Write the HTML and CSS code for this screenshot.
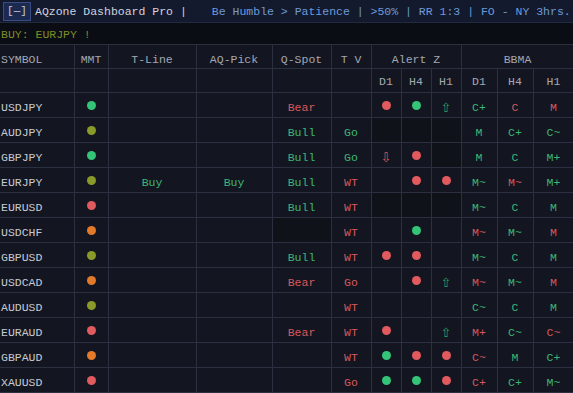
FILE: index.html
```html
<!DOCTYPE html>
<html>
<head>
<meta charset="utf-8">
<link rel="stylesheet" href="styles.css">
</head>
<body>
<div class="topbar">
  <span class="btn">[&#8212;]</span>
  <span class="title">AQzone Dashboard Pro |</span>
  <span class="motto">Be Humble &gt; Patience | &gt;50% | RR 1:3 | FO - NY 3hrs.</span>
</div>
<div class="signal">BUY: EURJPY !</div>
<table class="grid">
  <colgroup>
    <col class="c-sym"><col class="c-mmt"><col class="c-tl"><col class="c-aq"><col class="c-qs"><col class="c-tv">
    <col class="c-al"><col class="c-al"><col class="c-al"><col class="c-bb"><col class="c-bb"><col class="c-bb3">
  </colgroup>
  <thead>
    <tr class="h1">
      <th class="left">SYMBOL</th><th>MMT</th><th>T-Line</th><th>AQ-Pick</th><th>Q-Spot</th><th>T V</th>
      <th colspan="3">Alert Z</th><th colspan="3">BBMA</th>
    </tr>
    <tr class="h2">
      <th></th><th></th><th></th><th></th><th></th><th></th>
      <th>D1</th><th>H4</th><th>H1</th><th>D1</th><th>H4</th><th>H1</th>
    </tr>
  </thead>
  <tbody>
    <tr><td class="sym">USDJPY</td><td><i class="dot g"></i></td><td></td><td></td><td class="r">Bear</td><td></td><td><i class="dot r"></i></td><td><i class="dot g"></i></td><td class="ar g">&#8679;</td><td class="gt">C+</td><td class="r">C</td><td class="r">M</td></tr>
    <tr><td class="sym">AUDJPY</td><td><i class="dot o"></i></td><td></td><td></td><td class="gt">Bull</td><td class="gt">Go</td><td class="dk"></td><td class="dk"></td><td class="dk"></td><td class="gt">M</td><td class="gt">C+</td><td class="gt">C~</td></tr>
    <tr><td class="sym">GBPJPY</td><td><i class="dot g"></i></td><td></td><td></td><td class="gt">Bull</td><td class="gt">Go</td><td class="ar r">&#8681;</td><td><i class="dot r"></i></td><td class="dk"></td><td class="gt">M</td><td class="gt">C</td><td class="gt">M+</td></tr>
    <tr><td class="sym">EURJPY</td><td><i class="dot o"></i></td><td class="gt">Buy</td><td class="gt">Buy</td><td class="gt">Bull</td><td class="r">WT</td><td></td><td><i class="dot r"></i></td><td><i class="dot r"></i></td><td class="gt">M~</td><td class="r">M~</td><td class="gt">M+</td></tr>
    <tr><td class="sym">EURUSD</td><td><i class="dot r"></i></td><td></td><td></td><td class="gt">Bull</td><td class="r">WT</td><td class="dk"></td><td class="dk"></td><td class="dk"></td><td class="gt">M~</td><td class="gt">C</td><td class="gt">M</td></tr>
    <tr><td class="sym">USDCHF</td><td><i class="dot y"></i></td><td></td><td></td><td class="dk"></td><td class="r">WT</td><td></td><td><i class="dot g"></i></td><td></td><td class="r">M~</td><td class="gt">M~</td><td class="r">M</td></tr>
    <tr><td class="sym">GBPUSD</td><td><i class="dot o"></i></td><td></td><td></td><td class="gt">Bull</td><td class="r">WT</td><td><i class="dot r"></i></td><td><i class="dot r"></i></td><td></td><td class="gt">M~</td><td class="gt">C</td><td class="gt">M</td></tr>
    <tr><td class="sym">USDCAD</td><td><i class="dot y"></i></td><td></td><td></td><td class="r">Bear</td><td class="r">Go</td><td></td><td><i class="dot r"></i></td><td class="ar g">&#8679;</td><td class="r">M~</td><td class="gt">M~</td><td class="r">M</td></tr>
    <tr><td class="sym">AUDUSD</td><td><i class="dot o"></i></td><td></td><td></td><td></td><td class="r">WT</td><td></td><td></td><td></td><td class="gt">C~</td><td class="gt">C</td><td class="gt">M</td></tr>
    <tr><td class="sym">EURAUD</td><td><i class="dot r"></i></td><td></td><td></td><td class="r">Bear</td><td class="r">WT</td><td><i class="dot r"></i></td><td></td><td class="ar g">&#8679;</td><td class="r">M+</td><td class="gt">C~</td><td class="r">C~</td></tr>
    <tr><td class="sym">GBPAUD</td><td><i class="dot y"></i></td><td></td><td></td><td></td><td class="r">WT</td><td><i class="dot g"></i></td><td><i class="dot r"></i></td><td><i class="dot r"></i></td><td class="r">C~</td><td class="gt">M</td><td class="gt">C+</td></tr>
    <tr><td class="sym">XAUUSD</td><td><i class="dot r"></i></td><td></td><td></td><td></td><td class="r">Go</td><td><i class="dot g"></i></td><td><i class="dot g"></i></td><td><i class="dot r"></i></td><td class="r">C+</td><td class="gt">C+</td><td class="gt">M~</td></tr>
  </tbody>
</table>
</body>
</html>
```
FILE: styles.css
```css
html, body {
  margin: 0;
  padding: 0;
  background: #1f2331;
  width: 573px;
  height: 393px;
  overflow: hidden;
  font-family: "Liberation Mono", "DejaVu Sans Mono", monospace;
  font-size: 11.5px;
}

.topbar {
  height: 23px;
  box-sizing: border-box;
  background: #141a2e;
  border-bottom: 1px solid #222a40;
  display: flex;
  align-items: center;
  padding-left: 3px;
  white-space: nowrap;
}

.btn {
  box-sizing: border-box;
  width: 28px;
  height: 19px;
  border: 1px solid #3a4d82;
  background: #1c2a52;
  color: #c3cadf;
  display: flex;
  align-items: center;
  justify-content: center;
  font-size: 11px;
  margin-right: 4px;
}

.title {
  color: #cfd3de;
  margin-right: 25px;
}

.motto {
  color: #6d9ad6;
}

.signal {
  height: 22px;
  box-sizing: border-box;
  background: #0b0d14;
  color: #7f8c26;
  display: flex;
  align-items: center;
  padding-left: 1px;
  padding-top: 2px;
  border-bottom: 1px solid #2a2f3f;
}

.grid {
  border-collapse: collapse;
  table-layout: fixed;
  width: 574px;
  background: #131620;
}

.c-sym { width: 74px; }
.c-mmt { width: 34px; }
.c-tl { width: 88px; }
.c-aq { width: 76px; }
.c-qs { width: 59px; }
.c-tv { width: 40px; }
.c-al { width: 30px; }
.c-bb { width: 36px; }
.c-bb3 { width: 41px; }

.grid th, .grid td {
  border: 1px solid #2b3041;
  padding: 0;
  line-height: 13px;
  text-align: center;
  vertical-align: middle;
  white-space: nowrap;
  overflow: hidden;
}

.grid tr:first-child th { border-top: none; }
.grid tr > :first-child { border-left: none; }

.grid th {
  color: #a3a7b3;
  font-weight: normal;
}

.grid th.left { text-align: left; padding-left: 1px; }

.h1 { height: 23px; }
.h1 th { padding-top: 6px; }
.h2 { height: 24px; }
.h2 th { padding-top: 2px; }

.grid tbody tr { height: 25px; }
.grid td { padding-top: 5px; }

.grid td.sym {
  text-align: left;
  padding-left: 1px;
  color: #c6c9d2;
}

.gt { color: #3cb676; }
.r { color: #d6585f; }
.dk { background: #10121a; }

.ar { font-family: "DejaVu Sans", sans-serif; font-size: 13px; }
.ar.g { color: #2f9e60; }
.ar.r { color: #d6585f; }

.dot {
  display: inline-block;
  width: 9px;
  height: 9px;
  border-radius: 50%;
  vertical-align: middle;
  margin-top: -3px;
}
.dot.g { background: #34c477; }
.dot.o { background: #8a9a28; }
.dot.r { background: #e05a5e; }
.dot.y { background: #e27a2a; }
```
